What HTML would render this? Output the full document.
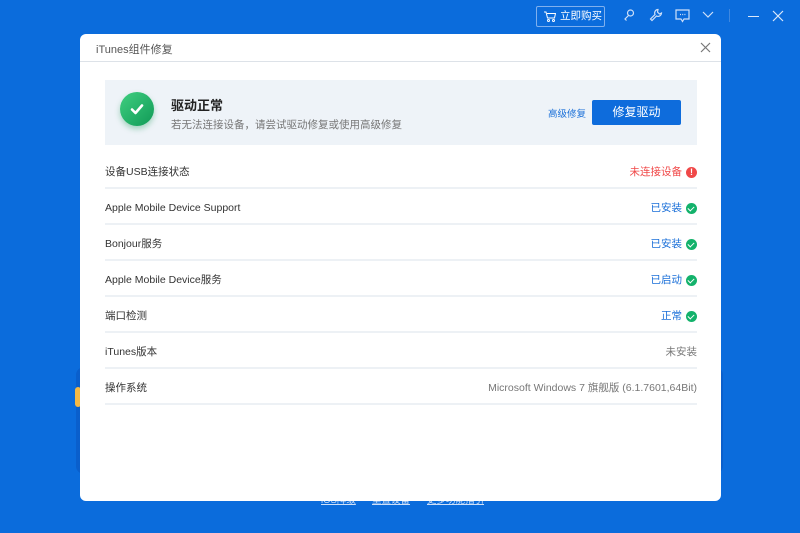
<!DOCTYPE html>
<html><head><meta charset="utf-8"><style>
*{margin:0;padding:0;box-sizing:border-box}
body{width:800px;height:533px;background:#0b6cdc;position:relative;overflow:hidden;font-family:"Liberation Sans","Noto Sans CJK SC",sans-serif}
.abs{position:absolute}
.buy{left:536px;top:6px;width:69px;height:21px;border:1px solid #7fb0ee;border-radius:2px;color:#fff;font-size:10.5px;line-height:19px;padding-left:23px;white-space:nowrap}
.panel{left:76px;top:367px;width:647px;height:107px;background:#0a5fcc;border-radius:8px}
.yel{left:75px;top:387px;width:6px;height:20px;background:#f5b945;border-radius:3px}
.links{top:492px;font-size:9.5px;color:#cfe0f8;text-decoration:underline}
.dlg{left:80px;top:34px;width:641px;height:467px;background:#fff;border-radius:6px}
.ttl{left:16px;top:7px;font-size:11px;color:#555}
.hl{left:0;top:27px;width:641px;height:1px;background:#dde2e8}
.ban{left:25px;top:46px;width:592px;height:65px;background:#eef3f8}
.row{left:25px;width:592px;height:36px;border-bottom:2px solid #edf1f5;font-size:10.5px;color:#333;line-height:38px}
.row .r{position:absolute;right:0;top:2px;display:flex;align-items:center;height:34px}
.ok{display:inline-block;width:11px;height:11px;border-radius:50%;background:#13b26b;margin-left:4px;position:relative}
.ok:after{content:"";position:absolute;left:3px;top:2px;width:3px;height:5px;border:solid #fff;border-width:0 1.5px 1.5px 0;transform:rotate(45deg)}
.blue{color:#1a6fd8}
</style></head><body>
<div class="abs panel"></div><div class="abs yel"></div>
<div class="abs links" style="left:321px">iOS降级</div>
<div class="abs links" style="left:372px">重置设备</div>
<div class="abs links" style="left:427px">更多功能指引</div>
<div class="abs buy"><svg class="abs" style="left:7px;top:4px" width="12" height="11" viewBox="0 0 12 11" fill="none" stroke="#fff" stroke-width="1"><path d="M0 1h2l1.5 6h7l1-4.5H3"/><circle cx="4.5" cy="9.5" r="1"/><circle cx="9.5" cy="9.5" r="1"/></svg>立即购买</div>
<svg class="abs" style="left:622px;top:8px" width="14" height="14" viewBox="0 0 14 14" fill="none" stroke="#cfe0f8" stroke-width="1.2"><circle cx="8.5" cy="5" r="3"/><path d="M6.5 7.5L3 11l1.5 1.5"/></svg>
<svg class="abs" style="left:649px;top:8px" width="14" height="14" viewBox="0 0 14 14" fill="none" stroke="#cfe0f8" stroke-width="1.2"><path d="M9 1.5a3.5 3.5 0 0 0-3 5L1.5 11l1.5 1.5L7.5 8a3.5 3.5 0 0 0 5-3l-2 1-2-2z"/></svg>
<svg class="abs" style="left:675px;top:9px" width="15" height="14" viewBox="0 0 15 14" fill="none" stroke="#cfe0f8" stroke-width="1.2"><path d="M1 1h13v9H9l-1.5 2.5L6 10H1z"/><path d="M5 5.5h1M7.2 5.5h1M9.4 5.5h1"/></svg>
<svg class="abs" style="left:702px;top:11px" width="12" height="8" viewBox="0 0 12 8" fill="none" stroke="#cfe0f8" stroke-width="1.2"><path d="M1 1l5 5 5-5"/></svg>
<div class="abs" style="left:729px;top:9px;width:1px;height:13px;background:#3f88e0"></div>
<div class="abs" style="left:748px;top:16px;width:11px;height:1.2px;background:#dbe8fa"></div>
<svg class="abs" style="left:772px;top:10px" width="12" height="12" viewBox="0 0 12 12" stroke="#dbe8fa" stroke-width="1.2"><path d="M1 1l10 10M11 1L1 11"/></svg>
<div class="abs dlg">
<div class="abs ttl">iTunes组件修复</div>
<svg class="abs" style="left:620px;top:8px" width="11" height="11" viewBox="0 0 11 11" stroke="#777" stroke-width="1.2"><path d="M1 1l9 9M10 1L1 10"/></svg>
<div class="abs hl"></div>
<div class="abs ban">
<div class="abs" style="left:15px;top:12px;width:34px;height:34px;border-radius:50%;background:linear-gradient(135deg,#3fcf80,#119a57);box-shadow:0 3px 6px rgba(20,150,80,.35)"></div>
<svg class="abs" style="left:23px;top:20px" width="18" height="18" viewBox="0 0 18 18" fill="none" stroke="#fff" stroke-width="2.6" stroke-linecap="round" stroke-linejoin="round"><path d="M4 9.5l3.5 3.5L14 5.5"/></svg>
<div class="abs" style="left:66px;top:15px;font-size:13px;font-weight:bold;color:#222">驱动正常</div>
<div class="abs" style="left:66px;top:37px;font-size:10.5px;color:#777">若无法连接设备，请尝试驱动修复或使用高级修复</div>
<div class="abs blue" style="left:443px;top:26px;font-size:9.5px">高级修复</div>
<div class="abs" style="left:487px;top:20px;width:89px;height:25px;background:#0e6cdc;border-radius:2px;color:#fff;font-size:12px;text-align:center;line-height:25px">修复驱动</div>
</div>
<div class="abs row" style="top:119px">设备USB连接状态<div class="r" style="color:#f04848">未连接设备<span style="display:inline-block;width:11px;height:11px;border-radius:50%;background:#f04848;margin-left:4px;color:#fff;font-size:9px;font-weight:bold;line-height:11px;text-align:center">!</span></div></div>
<div class="abs row" style="top:155px">Apple Mobile Device Support<div class="r blue">已安装<span class="ok"></span></div></div>
<div class="abs row" style="top:191px">Bonjour服务<div class="r blue">已安装<span class="ok"></span></div></div>
<div class="abs row" style="top:227px">Apple Mobile Device服务<div class="r blue">已启动<span class="ok"></span></div></div>
<div class="abs row" style="top:263px">端口检测<div class="r blue">正常<span class="ok"></span></div></div>
<div class="abs row" style="top:299px">iTunes版本<div class="r" style="color:#777">未安装</div></div>
<div class="abs row" style="top:335px">操作系统<div class="r" style="color:#777">Microsoft Windows 7 旗舰版 (6.1.7601,64Bit)</div></div>
</div>
</body></html>
